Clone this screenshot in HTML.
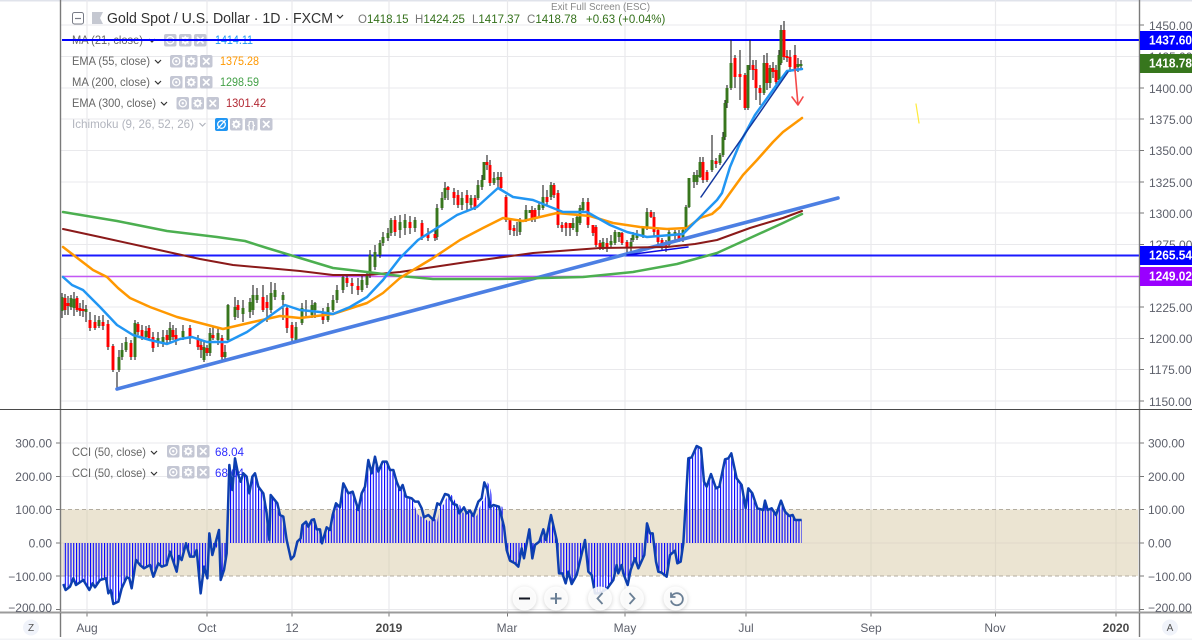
<!DOCTYPE html>
<html><head><meta charset="utf-8"><title>Gold Spot / U.S. Dollar</title>
<style>
html,body{margin:0;padding:0;background:#fff;overflow:hidden}
svg{display:block;filter:blur(.35px)}
text{font-family:"Liberation Sans",sans-serif;font-size:12px;fill:#555}
.l{font-size:12px;fill:#666}
.a{font-size:12px;fill:#5d606b}
.o{font-size:11.5px;fill:#33701a}
.w{font-size:12.5px;fill:#fff;font-weight:bold}
</style></head><body>
<svg width="1192" height="640" viewBox="0 0 1192 640" xmlns="http://www.w3.org/2000/svg">
<defs>
<pattern id="st" patternUnits="userSpaceOnUse" width="2.8" height="10" x="62"><rect width="1.1" height="10" fill="#0000ff"/></pattern>
<g id="ib"><rect width="12.5" height="12.5" rx="2" fill="#c4c7d4"/></g>
<g id="eye"><use href="#ib"/><circle cx="6.25" cy="6.25" r="3.6" fill="none" stroke="#fff" stroke-width="1.3"/><circle cx="6.25" cy="6.25" r="1.2" fill="#fff"/></g>
<g id="gear"><use href="#ib"/><circle cx="6.25" cy="6.25" r="2.6" fill="none" stroke="#fff" stroke-width="2"/><path d="M6.25 1.8v1.6M6.25 9.1v1.6M1.8 6.25h1.6M9.1 6.25h1.6M3 3l1.1 1.1M8.4 8.4l1.1 1.1M9.5 3L8.4 4.1M4.1 8.4L3 9.5" stroke="#fff" stroke-width="1.2"/></g>
<g id="xx"><use href="#ib"/><path d="M3 3l6.5 6.5M9.5 3L3 9.5" stroke="#fff" stroke-width="1.6"/></g>
<g id="tri"><use href="#eye"/><use href="#gear" x="15"/><use href="#xx" x="30"/></g>
<path id="chev" d="M0 0l3 3 3-3" fill="none" stroke="#333" stroke-width="1.2"/>
</defs>

<rect width="1192" height="640" fill="#fff"/>
<rect width="1192" height="1.5" fill="#e0e3eb"/>
<rect y="638.5" width="1192" height="1.5" fill="#f2f3f6"/>

<!-- grid -->
<path d="M87 0V409M207 0V409M292 0V409M389 0V409M507.5 0V409M625 0V409M746 0V409M871 0V409M995.5 0V409M1116 0V409M87 410V612M207 410V612M292 410V612M389 410V612M507.5 410V612M625 410V612M746 410V612M871 410V612M995.5 410V612M1116 410V612" stroke="#e9e9ec" stroke-width="1.2" fill="none"/>
<path d="M61 25H1139M61 56.5H1139M61 88H1139M61 119H1139M61 150.5H1139M61 182H1139M61 213H1139M61 244.5H1139M61 276H1139M61 307H1139M61 338.5H1139M61 369.5H1139M61 401H1139M61 443H1139M61 476.5H1139M61 543H1139M61 609.5H1139" stroke="#e9e9ec" stroke-width="1.1" fill="none"/>

<!-- CCI band -->
<rect x="61" y="509.5" width="1077" height="66.5" fill="#d9cba8" fill-opacity=".52"/>
<path d="M61 509.5H1138M61 576H1138" stroke="#b3ada0" stroke-width="1" stroke-dasharray="4 3" fill="none"/>

<!-- legend -->
<rect x="72.5" y="12.5" width="11" height="11.5" rx="2" fill="none" stroke="#787b86" stroke-width="1"/>
<path d="M75 18.5h6" stroke="#787b86" stroke-width="1.2"/>
<path d="M92 12h11l-3 6 3 6H92z" fill="#c5c8d1"/>
<text x="107" y="23" textLength="226" lengthAdjust="spacingAndGlyphs" style="font-size:14.5px;fill:#333">Gold Spot / U.S. Dollar · 1D · FXCM</text>
<use href="#chev" x="337" y="15"/>
<text x="358" y="23" class="o"><tspan fill="#777">O</tspan>1418.15</text>
<text x="415" y="23" class="o"><tspan fill="#777">H</tspan>1424.25</text>
<text x="472" y="23" class="o"><tspan fill="#777">L</tspan>1417.37</text>
<text x="527" y="23" class="o"><tspan fill="#777">C</tspan>1418.78</text>
<text x="586" y="23" class="o">+0.63 (+0.04%)</text>
<text x="551" y="10" textLength="99" lengthAdjust="spacingAndGlyphs" style="font-size:10px;fill:#8a8a8a">Exit Full Screen (ESC)</text>

<text x="72" y="44" class="l" textLength="71" lengthAdjust="spacingAndGlyphs">MA (21, close)</text>
<use href="#chev" x="149" y="39"/><use href="#tri" x="164" y="34"/>
<text x="215" y="44" textLength="38" lengthAdjust="spacingAndGlyphs" style="fill:#2196f3">1414.11</text>

<text x="72" y="65" class="l" textLength="78" lengthAdjust="spacingAndGlyphs">EMA (55, close)</text>
<use href="#chev" x="155" y="60"/><use href="#tri" x="170" y="55"/>
<text x="220" y="65" textLength="39" lengthAdjust="spacingAndGlyphs" style="fill:#ff9800">1375.28</text>

<text x="72" y="86" class="l" textLength="78" lengthAdjust="spacingAndGlyphs">MA (200, close)</text>
<use href="#chev" x="155" y="81"/><use href="#tri" x="170" y="76"/>
<text x="220" y="86" textLength="39" lengthAdjust="spacingAndGlyphs" style="fill:#43a047">1298.59</text>

<text x="72" y="107" class="l" textLength="84" lengthAdjust="spacingAndGlyphs">EMA (300, close)</text>
<use href="#chev" x="161" y="102"/><use href="#tri" x="176.5" y="97"/>
<text x="226" y="107" textLength="40" lengthAdjust="spacingAndGlyphs" style="fill:#b22833">1301.42</text>

<text x="72" y="128" textLength="122" lengthAdjust="spacingAndGlyphs" style="fill:#b2b5be">Ichimoku (9, 26, 52, 26)</text>
<path d="M199.5 123l3 3 3-3" fill="none" stroke="#b2b5be" stroke-width="1.2"/>
<rect x="215" y="118" width="13" height="13" rx="2" fill="#2196f3"/>
<circle cx="221.5" cy="124.5" r="3.8" fill="none" stroke="#fff" stroke-width="1.3"/><path d="M217.5 129l8-9" stroke="#fff" stroke-width="1.3"/>
<use href="#gear" x="230" y="118"/>
<use href="#ib" x="245" y="118"/><text x="251.2" y="128.5" text-anchor="middle" style="font-size:10px;fill:#fff;font-weight:bold">{}</text>
<use href="#xx" x="260" y="118"/>

<text x="72" y="456" class="l" textLength="74" lengthAdjust="spacingAndGlyphs">CCI (50, close)</text>
<use href="#chev" x="151" y="451"/><use href="#tri" x="167" y="445"/>
<text x="215" y="456" textLength="29" lengthAdjust="spacingAndGlyphs" style="fill:#2e2eff">68.04</text>
<text x="72" y="477" class="l" textLength="74" lengthAdjust="spacingAndGlyphs">CCI (50, close)</text>
<use href="#chev" x="151" y="472"/><use href="#tri" x="167" y="466"/>
<text x="215" y="477" textLength="29" lengthAdjust="spacingAndGlyphs" style="fill:#2e2eff">68.04</text>

<!-- horizontal levels -->
<path d="M62 40H1139" stroke="#0000ff" stroke-width="2"/>
<path d="M62 255.5H1139" stroke="#1a1aff" stroke-width="2"/>
<path d="M62 276.5H1139" stroke="#c458f5" stroke-width="1.6"/>

<!-- wicks -->
<path fill="none" stroke="#222" stroke-width="1.1" d="M62 293V318M65 294V315M68 296V315M71 295V310M74 292V316M77 296V312M80 303V316M83 300V317M86 305V322M90 312V331M95 315V330M99 316V328M103 315V330M108 320V350M113 344V372M117 372V389M119 350V372M122 343V360M126 337V352M131 340V360M135 320V360M138 322V335M142 325V340M146 326V340M149 325V340M153 332V352M158 332V347M163 330V347M167 330V345M170 322V344M173 325V340M176 328V345M183 325V340M190 325V344M198 335V350M201 340V358M204 340V362M207 345V356M210 328V356M213 327V340M218 328V345M222 335V362M225 345V359M228 304V342M235 297V320M238 300V318M243 300V322M250 298V318M253 285V315M257 288V303M263 285V312M267 295V322M271 282V313M275 283V300M283 292V320M287 305V333M292 322V341M296 322V343M302 303V325M306 300V318M312 300V318M315 302V318M323 308V324M328 303V322M333 295V312M337 285V303M343 274V293M347 275V287M352 278V294M358 278V295M362 276V292M367 272V288M370 250V278M375 245V270M380 240V258M383 232V246M388 228V241M391 218V236M395 216V236M400 215V238M405 214V235M410 216V234M415 217V232M422 220V240M428 228V241M435 228V241M437 204V240M442 192V210M445 182V200M448 186V200M454 188V205M458 190V208M462 192V210M467 190V210M471 195V208M475 195V210M478 180V200M482 175V190M487 155V170M490 160V186M494 172V185M498 172V188M501 172V190M506 195V222M510 218V235M514 225V236M517 222V236M520 218V235M526 205V222M532 206V222M535 208V222M539 202V218M543 185V210M547 190V205M551 182V200M554 183V198M558 190V228M562 222V232M566 222V236M570 223V236M573 218V230M577 214V236M580 205V225M583 198V212M588 198V228M593 225V236M596 225V247M600 240V250M603 238V250M607 238V252M611 235V248M615 230V245M619 232V242M622 232V245M627 240V255M631 238V253M633 232V242M637 230V240M643 226V238M647 208V230M651 210V218M654 212V236M658 228V245M662 238V250M666 240V252M669 230V247M675 230V240M679 230V242M683 228V242M686 205V232M689 178V208M694 172V188M697 170V185M700 157V178M703 157V183M707 170V182M712 135V172M716 158V168M720 153V165M723 132V157M725 100V140M727 85V108M731 40V90M735 55V88M740 50V100M745 73V110M748 65V110M750 40V70M753 60V80M756 60V100M760 85V105M764 55V95M767 53V90M770 65V88M773 62V78M776 65V88M779 50V83M781 25V65M784 21V60M787 50V62M790 50V72M795 45V72M798 58V72M801 60V70"/>
<!-- green bodies -->
<path fill="none" stroke="#38761d" stroke-width="2.9" d="M62 297V311M71 298V307M74 299V308M86 309V312M99 320V326M119 357V370M122 350V357M126 342V350M135 323V357M146 331V337M158 338V343M163 337V343M170 328V340M183 331V337M204 347V360M210 333V353M218 333V340M225 352V357M228 305V340M235 307V317M243 308V314M250 302V312M253 295V310M257 295V300M271 293V310M275 290V297M283 295V300M296 327V340M302 308V323M312 305V315M315 303V310M328 307V320M333 300V310M337 290V300M343 277V290M362 280V290M367 275V285M370 255V275M375 252V267M380 243V255M383 237V243M388 233V238M391 220V233M400 222V230M405 220V228M415 220V228M437 208V237M442 198V208M445 188V198M462 198V205M471 198V205M478 185V198M482 180V187M484 162V180M494 178V183M498 177V180M520 220V232M526 210V220M530 210V213M539 205V210M543 197V208M551 185V197M573 223V228M577 217V232M580 208V223M583 202V210M603 242V247M611 241V245M615 232V243M619 232V237M631 242V248M633 235V240M637 235V238M643 228V237M647 212V227M669 232V245M675 232V236M683 230V240M686 207V230M689 178V207M694 175V182M697 175V182M700 162V177M712 160V170M720 155V163M723 137V155M725 103V137M727 88V103M731 63V88M748 65V108M764 63V93M770 68V83M779 55V80M781 30V63M798 64V67M801 64V66"/>
<!-- red bodies -->
<path fill="none" stroke="#ff0000" stroke-width="2.9" d="M65 298V310M68 303V306M77 298V310M80 308V311M83 309V311M90 320V328M95 322V328M103 322V326M108 324V347M113 346V370M131 343V357M138 324V332M142 330V337M149 328V338M153 337V348M167 335V340M173 330V337M176 335V340M190 328V338M198 338V347M201 345V350M207 348V353M213 335V338M222 338V357M238 305V310M263 297V310M267 302V308M287 308V328M292 325V338M323 313V320M347 278V283M352 283V286M358 286V290M395 220V232M410 222V228M422 223V237M428 233V238M435 234V238M448 187V190M454 192V198M458 195V205M467 195V203M475 198V207M487 162V165M490 165V183M501 177V188M506 197V220M510 220V230M514 228V231M532 210V218M535 210V218M547 197V202M554 185V195M558 193V225M562 225V228M566 223V228M570 223V228M588 202V225M593 225V233M596 227V245M600 243V247M607 243V248M622 233V243M627 242V248M651 212V217M654 217V232M658 230V242M662 240V245M666 242V247M679 233V240M703 162V180M707 172V180M716 161V164M735 58V77M740 74V77M745 75V108M753 65V70M756 69V88M760 88V93M767 63V83M773 68V72M776 70V82M784 30V57M787 56V58M790 57V67M795 55V70"/>

<!-- indicator lines -->
<g fill="none" stroke-linejoin="round" stroke-linecap="round">
<path stroke="#4c7fe3" stroke-width="3.6" d="M117 389L838 198"/>
<path stroke="#8b1a1a" stroke-width="2" d="M63 229L100 237L150 248L200 259L233 265L267 268L300 271L333 275L367 275L400 272L467 262L533 253L600 248L667 247L695 244L717 240L750 228L783 218L802 211"/>
<path stroke="#4caf50" stroke-width="2.5" d="M63 212L117 221L167 231L217 237L245 241L267 248L300 258L333 268L367 272L400 276L433 279L500 279L583 277L633 272L677 264L717 253L750 238L783 223L802 214"/>
<path stroke="#ff9800" stroke-width="2.5" d="M63 247L93 270L107 277L118 288L130 298L150 307L177 317L200 323L223 329L253 322L280 316L300 318L333 314L367 303L383 293L400 278L433 258L460 240L483 228L503 218L523 221L557 213L590 216L613 223L640 227L667 229L687 228L700 218L712 214L720 207L730 193L743 175L757 160L773 142L783 132L802 118"/>
<path stroke="#2196f3" stroke-width="2.5" d="M63 277L72 285L83 290L100 307L117 325L133 335L150 340L167 344L180 339L192 337L207 342L227 342L247 332L267 318L285 305L300 310L320 312L333 314L350 307L367 297L383 280L400 258L418 240L437 228L457 215L477 207L498 188L513 197L533 200L563 212L587 212L610 225L627 232L647 237L683 234L700 217L717 200L722 193L730 167L740 143L755 115L778 83L787 71L802 69"/>
<path stroke="#13379e" stroke-width="1.5" d="M701 197L788 72"/>
<path stroke="#0a0ae0" stroke-width="1.5" d="M627 255L688 247"/>
<path stroke="#f44a4a" stroke-width="1.6" d="M795 70L798 105M792 97L798 105L803 97"/>
<path stroke="#ffeb3b" stroke-width="1.2" d="M916 104L919 123"/>
</g>

<!-- CCI -->
<g fill="url(#st)">
<path d="M63.3 543V584L65.7 590L70 586.7L73.3 578.3L76 585L83.3 580L89.3 590L92.7 583.3L95 587.3L100 580L106 578.3L108.3 593.3L110.7 590L113.3 604L118.3 601.7L121.7 588.3L126.7 577.3L129.3 578.3L131.7 588.3L136 560L140 565L144 568.3L150 565L153.3 576.7L158.3 563.3L161.7 566.7L166.7 565L170 551.7L176.7 571.7L179 556L181.7 560L186 543L190 556.7L194 556.7L196.7 550L200.7 593.3L204 566.7L207.3 578.3L209.3 543L212.3 555L219 543L220.7 580L224 570L226.7 553.3L227.3 543Z"/>
<path d="M229.3 543V465L232.3 490L235 458.3L238.3 475L240.7 481.7L243.3 473.3L246.7 476.7L249.3 493.3L252.3 476.7L255 473.3L258.3 486.7L263.3 493.3L266.7 513.3L269.3 543L270.7 495L277.3 503.3L280 515L283.3 516.7L286.7 543Z"/>
<path d="M297 543L300.7 538.3L302.3 525L306 521.7L310 525L311.7 520L315 519.7L317 530L320 529.7L322 543L326.7 527.3L330 530L332.7 515L336 503.3L340 507.3L343.3 483.3L348.3 493.3L352.7 491.7L358.3 510L361.7 493.3L365 486.7L368.3 460L371.7 473.3L375 456.7L378.3 471.7L382.7 461.7L386.7 461.7L390 470L393.3 470L396.7 481.7L400 490L402.7 485L406 496.7L411.7 498.3L415 507.3L418.3 515L422 517.3L424 517.3L428.3 522L433.3 516.7L437.3 521.7L440 503.3L443.3 505L448.3 494L451.7 495L456.7 504L460 505L463 513.3L467.3 507.3L470 513.3L473.3 510.7L476.7 516L481.7 501.7L485 498.3L487.7 482.3L490.7 489.3L493.3 507.3L496.7 505L502.3 506.7L504 520L506.7 543Z"/>
<path d="M507.5 543V550L510 560.7L515 563.3L518.3 566.7L521.7 548.3L524 558.3L529.3 529.3L532.3 558.3L535 545L539.3 541.7L543.3 529.3L546 540L551 515L556.7 540L559 573.3L562.3 573.3L565.7 583.3L568.3 571.7L571.7 584L576.7 575L585 540L588.3 571.7L591.7 575L595 593.3L600 593.3L607.3 588.3L613.3 580L616.7 565L618.3 573.3L621.7 565L623.3 573.3L627.7 585L630.7 570L635 558.3L638.3 568.3L644.3 555L647 543Z"/>
<path d="M647 543L647 523.3L650 533.3L652.7 533.3L656 561.7L658.3 571.7L661.7 572.7L666.7 576.7L670 555L675 550.7L677.3 563.3L680.7 561.7L683.3 543Z"/>
<path d="M685 543L688.3 458.3L691.7 457.3L696.7 446L701 448.3L704 481.7L706.7 486.7L711 474L716 488.3L719.3 486.7L725 459.3L728.3 458.3L731.3 453.3L736.7 478.3L741.7 485L745.7 508.3L748.3 488.3L752.3 493.3L757.3 508.3L763.3 510L765 500.7L767.7 510L771.7 508.3L776 515L781 500.7L785 511.7L789.3 516L792.7 515L795 520L801.7 520V543Z"/>
</g>
<g transform="translate(0,430) scale(.33333)" fill="none" stroke="#0d3fb0" stroke-width="7.5" stroke-linejoin="round">
<path d="M190 462L197 480L210 470L220 445L228 465L250 450L268 480L278 460L285 472L300 450L318 445L325 490L332 480L340 522L355 515L365 475L380 442L388 445L395 475L408 390L420 405L432 415L450 405L460 440L475 400L485 410L500 405L510 365L530 425L537 378L545 390L558 340L570 380L582 380L590 360L602 490L612 410L622 445L628 310L637 375L657 300L662 450L672 420L680 370L688 105L697 180L705 85L715 135L722 155L730 130L740 140L748 190L757 140L765 130L775 170L790 190L800 250L808 330L812 195L832 220L840 255L850 260L860 330L873 388L882 378L892 335L902 325L907 285L918 275L925 290L935 270L942 268L950 298L960 298L966 340L980 292L990 300L998 255L1008 220L1020 232L1030 160L1045 190L1058 185L1075 240L1085 190L1095 170L1105 90L1115 130L1125 80L1135 125L1148 95L1160 95L1170 120L1180 120L1190 155L1200 180L1208 165L1218 200L1235 205L1245 215L1255 215L1265 235L1272 262L1285 255L1300 270L1312 220L1320 225L1335 192L1345 195L1360 222L1370 225L1378 250L1392 232L1400 250L1410 242L1420 258L1435 215L1445 205L1453 157L1462 178L1470 232L1480 225L1497 230L1512 290L1520 360L1530 392L1545 400L1555 410L1565 355L1572 385L1588 298L1597 385L1605 345L1618 335L1630 298L1638 330L1653 255L1670 330L1677 430L1687 430L1697 460L1705 425L1715 462L1730 435L1755 330L1765 425L1775 435L1785 490L1800 490L1822 475L1840 450L1850 405L1855 430L1865 405L1870 430L1883 465L1892 420L1905 385L1915 415L1933 375L1941 280L1950 310L1958 310L1968 395L1975 425L1985 428L2000 440L2010 375L2025 362L2032 400L2042 395L2050 340L2065 85L2075 82L2090 48L2103 55L2112 155L2120 170L2133 132L2148 175L2158 170L2175 88L2185 85L2194 70L2210 145L2225 165L2237 235L2245 175L2257 190L2272 235L2290 240L2295 212L2303 240L2315 235L2328 255L2343 212L2355 245L2368 258L2378 255L2385 270L2405 270"/>
</g>

<!-- axes and separators -->
<path d="M60.5 0V637M1139.5 0V637" stroke="#7a7a7a" stroke-width="1.4"/>
<path d="M0 409.5H1192" stroke="#4a4a4a" stroke-width="1.1"/>
<path d="M0 612.5H1192" stroke="#9b9b9b" stroke-width="2"/>
<path d="M1140 25h4M1140 56.5h4M1140 88h4M1140 119h4M1140 150.5h4M1140 182h4M1140 213h4M1140 244.5h4M1140 276h4M1140 307h4M1140 338.5h4M1140 369.5h4M1140 401h4M1140 443h4M1140 476.5h4M1140 509.5h4M1140 543h4M1140 576h4M1140 609.5h4M56 443h4M56 476.5h4M56 509.5h4M56 543h4M56 576h4M56 609.5h4" stroke="#777" stroke-width="1" fill="none"/>

<!-- price axis -->
<text x="1149" y="30" class="a">1450.00</text><text x="1149" y="61" class="a">1425.00</text><text x="1149" y="93" class="a">1400.00</text><text x="1149" y="124" class="a">1375.00</text><text x="1149" y="155" class="a">1350.00</text><text x="1149" y="187" class="a">1325.00</text><text x="1149" y="218" class="a">1300.00</text><text x="1149" y="249" class="a">1275.00</text><text x="1149" y="312" class="a">1225.00</text><text x="1149" y="343" class="a">1200.00</text><text x="1149" y="374" class="a">1175.00</text><text x="1149" y="406" class="a">1150.00</text>
<rect x="1140" y="31" width="52" height="19" fill="#0000ff"/><text x="1149" y="44.5" class="w" textLength="43" lengthAdjust="spacingAndGlyphs">1437.60</text>
<rect x="1140" y="54" width="52" height="19" fill="#37761d"/><text x="1149" y="67.5" class="w" textLength="43" lengthAdjust="spacingAndGlyphs">1418.78</text>
<rect x="1140" y="246" width="52" height="19" fill="#0000ff"/><text x="1149" y="259.5" class="w" textLength="43" lengthAdjust="spacingAndGlyphs">1265.54</text>
<rect x="1140" y="267" width="52" height="19" fill="#9900ff"/><text x="1149" y="280.5" class="w" textLength="43" lengthAdjust="spacingAndGlyphs">1249.02</text>

<!-- CCI axes -->
<text x="1148" y="447.5" class="a">300.00</text><text x="1148" y="481" class="a">200.00</text><text x="1148" y="514" class="a">100.00</text><text x="1148" y="547.5" class="a">0.00</text><text x="1148" y="581" class="a">−100.00</text><text x="1148" y="612" class="a">−200.00</text>
<g text-anchor="end"><text x="52" y="447.5" class="a">300.00</text><text x="52" y="481" class="a">200.00</text><text x="52" y="514" class="a">100.00</text><text x="52" y="547.5" class="a">0.00</text><text x="52" y="581" class="a">−100.00</text><text x="52" y="612" class="a">−200.00</text></g>
<rect x="0" y="613.5" width="1192" height="24" fill="#fff"/>
<path d="M60.5 613V637M1139.5 613V637" stroke="#7a7a7a" stroke-width="1.4"/>
<path d="M87 613.5v3M207 613.5v3M292 613.5v3M389 613.5v3M507.5 613.5v3M625 613.5v3M746 613.5v3M871 613.5v3M995.5 613.5v3M1116 613.5v3" stroke="#777" stroke-width="1"/>

<!-- time axis -->
<g text-anchor="middle">
<text x="87" y="632" class="a">Aug</text><text x="207" y="632" class="a">Oct</text><text x="292" y="632" class="a">12</text><text x="389" y="632" class="a" style="font-weight:bold;fill:#4a4a4a">2019</text><text x="507" y="632" class="a">Mar</text><text x="625" y="632" class="a">May</text><text x="746" y="632" class="a">Jul</text><text x="871" y="632" class="a">Sep</text><text x="995" y="632" class="a">Nov</text><text x="1116" y="632" class="a" style="font-weight:bold;fill:#4a4a4a">2020</text>
</g>
<circle cx="31" cy="627.5" r="8" fill="#f0f3fa"/><text x="31" y="631" text-anchor="middle" style="font-size:10px;fill:#555">Z</text>
<circle cx="1170" cy="627.5" r="8" fill="#f0f3fa"/><text x="1170" y="631" text-anchor="middle" style="font-size:10px;fill:#555">A</text>

<!-- zoom buttons -->
<g fill="#fff" fill-opacity=".88" style="filter:drop-shadow(0 1px 2px rgba(0,0,0,.2))">
<circle cx="524.5" cy="598.5" r="12"/><circle cx="556" cy="598.5" r="12"/><circle cx="600" cy="598.5" r="12"/><circle cx="632" cy="598.5" r="12"/><circle cx="675.5" cy="598.5" r="12"/>
</g>
<path d="M519 598.5h11" stroke="#131722" stroke-width="2"/>
<path d="M556 593v11M550.5 598.5h11" stroke="#6a7f95" stroke-width="2"/>
<path d="M602.5 593l-5 5.5 5 5.500M629.5 593l5 5.5-5 5.500" fill="none" stroke="#6a7f95" stroke-width="1.8"/>
<path d="M671 592.5v4.500h4.500M671.5 596.500a6 6 0 1 1-.5 4" fill="none" stroke="#6a7f95" stroke-width="1.8"/>
</svg>
</body></html>
